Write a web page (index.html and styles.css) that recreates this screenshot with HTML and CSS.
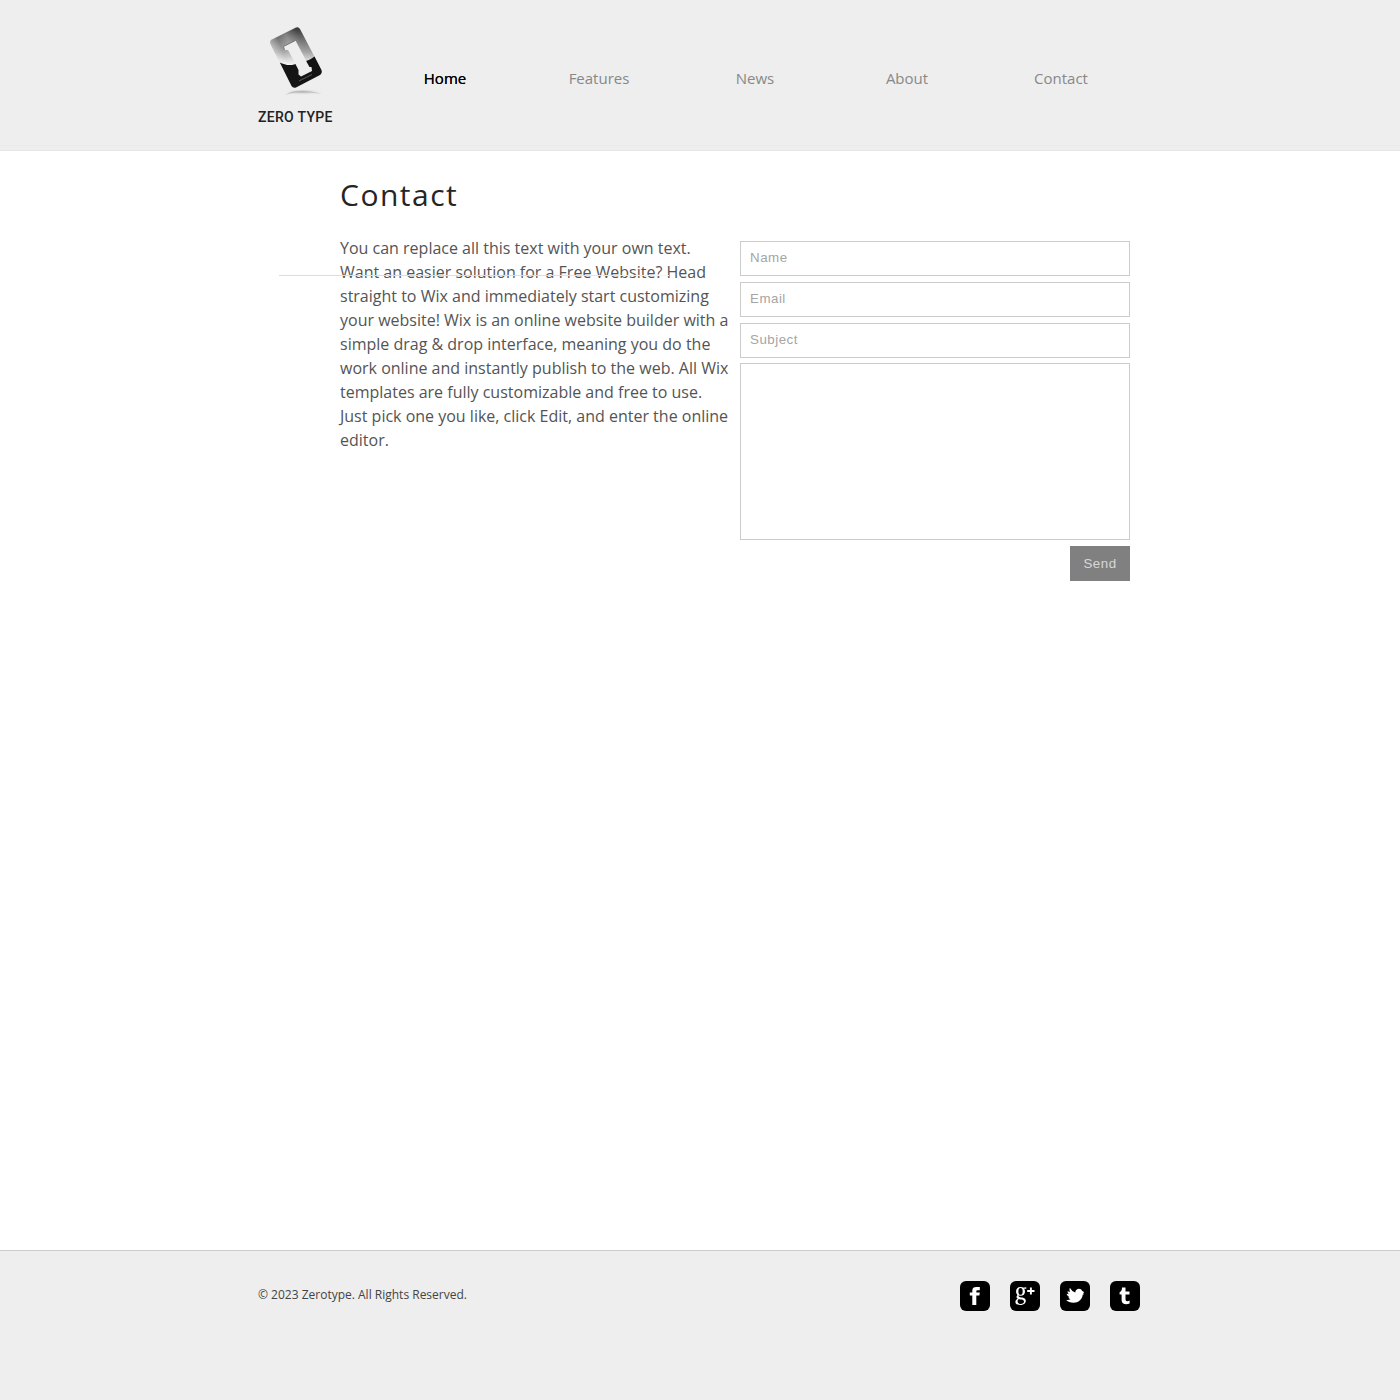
FILE: index.html
```html
<!DOCTYPE html>
<html lang="en">
<head>
<meta charset="utf-8">
<title>Contact - Zerotype</title>
<link rel="stylesheet" href="styles.css">
</head>
<body>
<header class="header">
  <div class="header-inner">
    <a class="logo">
      <svg class="logo-mark" width="75" height="80" viewBox="258 22 75 80">
        <defs>
          <linearGradient id="silver" gradientUnits="userSpaceOnUse" x1="297" y1="27" x2="297" y2="65">
            <stop offset="0" stop-color="#333"/><stop offset=".3" stop-color="#6c6c6c"/><stop offset=".65" stop-color="#a2a2a2"/><stop offset="1" stop-color="#f8f8f8"/>
          </linearGradient>
          <linearGradient id="sheen" gradientUnits="userSpaceOnUse" x1="271" y1="45" x2="298" y2="34">
            <stop offset="0" stop-color="#fff" stop-opacity=".4"/><stop offset=".3" stop-color="#fff" stop-opacity=".05"/><stop offset=".6" stop-color="#fff" stop-opacity=".25"/><stop offset="1" stop-color="#fff" stop-opacity="0"/>
          </linearGradient>
          <radialGradient id="shadow"><stop offset="0" stop-color="#bbb"/><stop offset="1" stop-color="#eee" stop-opacity="0"/></radialGradient>
        </defs>
        <ellipse cx="303" cy="92" rx="21" ry="3.500" fill="url(#shadow)"/>
        <path d="M285 95Q296 87 322 94Q300 90 285 95Z" fill="#aaa" opacity=".6"/>
        <path d="M271 40L296 27.500Q298.500 26.500 300 29L321.500 70Q322.500 73 320 75L296 87.500Q293 88.500 291.500 86L270.500 44Q269.500 41.500 271 40Z" fill="url(#silver)"/>
        <path d="M271 40L296 27.500Q298.500 26.500 300 29L315 57Q305 64 280 63L270.500 44Q269.500 41.500 271 40Z" fill="url(#sheen)"/>
        <path d="M279.800 62.500C284 64.500 289 66 294 64.500C300 62 308 62 314.500 56.500L321.500 70Q322.500 73 320 75L296 87.500Q293 88.500 291.500 86Z" fill="#141414"/>
        <path d="M283.500 46.500L295.500 40.500L307.500 63.500L309.500 67L311.500 67L312 71L301 76.500L298.500 74.500L298.500 70L289.500 52.500L288 50L284.500 50Z" fill="#eee"/>
        <path d="M284.500 50L283.500 46.500L295.500 40.500" fill="none" stroke="#666" stroke-width=".8"/>
        <path d="M299 81L312 74.500" stroke="#777" stroke-width=".7"/>
      </svg>
      <span class="logo-name">ZERO TYPE</span>
    </a>
    <nav class="nav">
      <a class="nav-link nav-link-active">Home</a>
      <a class="nav-link">Features</a>
      <a class="nav-link nav-link-news">News</a>
      <a class="nav-link nav-link-about">About</a>
      <a class="nav-link">Contact</a>
    </nav>
  </div>
</header>
<main class="main">
  <h1 class="title">Contact</h1>
  <div class="columns">
    <p class="intro">You can replace all this text with your own text.<br>Want an easier solution for a Free Website? Head<br>straight to Wix and immediately start customizing<br>your website! Wix is an online website builder with a<br>simple drag &amp; drop interface, meaning you do the<br>work online and instantly publish to the web. All Wix<br>templates are fully customizable and free to use.<br>Just pick one you like, click Edit, and enter the online<br>editor.</p>
    <form class="form">
      <input class="field" type="text" placeholder="Name">
      <input class="field" type="text" placeholder="Email">
      <input class="field" type="text" placeholder="Subject">
      <textarea class="field message"></textarea>
      <button class="send" type="button">Send</button>
    </form>
  </div>
</main>
<footer class="footer">
  <div class="footer-inner">
    <p class="copyright">© 2023 Zerotype. All Rights Reserved.</p>
    <div class="social">
      <a class="social-link"><svg width="30" height="30" viewBox="0 0 30 30"><path fill="#fff" d="M12.300 24V14.500H9.800V11.500H12.300V9.800C12.300 7 13.800 6 16.300 6H19.800V9.200H17.800C16.800 9.200 16.300 9.600 16.300 10.400V11.500H19.800L19.400 14.500H16.300V24Z"/></svg></a>
      <a class="social-link"><svg width="30" height="30" viewBox="0 0 30 30"><path fill="#fff" fill-rule="evenodd" d="M10.500 6C13.400 6 15 7.900 15 10.400C15 12.900 13.300 14.800 10.500 14.800C7.700 14.800 6.100 12.900 6.100 10.400C6.100 7.900 7.700 6 10.500 6ZM10.500 7C9.200 7 8.400 8 8.400 10.400C8.400 12.800 9.200 13.800 10.500 13.800C11.800 13.800 12.700 12.800 12.700 10.400C12.700 8 11.800 7 10.500 7Z"/><path fill="#fff" fill-rule="evenodd" d="M7.500 14L9 14.500C8.300 15.500 8.700 16 10 16.200C13.200 16.600 15.800 17 15.800 19.800C15.800 22.600 13.400 24 10.200 24C7.200 24 5.400 22.900 5.400 20.900C5.400 19.400 6.400 18.400 7.800 17.800C6.100 16.900 6.200 15.300 7.500 14ZM8.700 18.200C7 19 7 22.800 10.500 22.900C12.800 22.900 14 22 14 20.500C14 18.600 11.500 18.600 8.700 18.200ZM12.500 6.800L16.300 6.300V7.800H13.800Z"/><path fill="none" stroke="#fff" stroke-width="1.900" d="M17.200 10H24.500M20.900 6.400V13.600"/></svg></a>
      <a class="social-link"><svg width="30" height="30" viewBox="0 0 30 30"><path fill="#fff" d="M6 18.800Q8.500 19.300 10.500 18.300Q8.800 17.800 8.300 16.300H9.500Q7.200 15 6.500 12.800L9 13.200Q7.500 12 7.500 10.200L10 11Q9 9 9.800 6.800Q11.500 10 15.200 11.500C15.600 9 17 7.800 19 7.800Q21.300 7.800 22.300 10L24.300 11.300L22.900 12.200L24.200 13L22.700 13.800C22.200 18.500 18.500 21.800 13.500 21.800Q8.500 21.800 6 18.800Z"/></svg></a>
      <a class="social-link"><svg width="30" height="30" viewBox="0 0 30 30"><path fill="#fff" d="M12 6.500H15.500V10.500H19.500V13.500H15.500V18.300C15.500 20.500 17.500 20.500 19.600 19.600V22.600C15.500 24 11.600 23 11.600 19.200V13.500H9.600V11.200C11.300 10.500 12 9 12 6.500Z"/></svg></a>
    </div>
  </div>
</footer>
</body>
</html>
```
FILE: styles.css
```css
* { box-sizing: border-box; }
body {
  margin: 0;
  min-height: 1400px;
  display: flex;
  flex-direction: column;
  background: #fff;
  font-family: "Open Sans", sans-serif;
}
.header {
  height: 151px;
  background: linear-gradient(#e9e9e9, #e9e9e9) 0 145px / 100% 1px no-repeat #eee;
  border-bottom: 1px solid #e5e5e5;
}
.header-inner {
  display: flex;
  width: 884px;
  margin: 0 auto;
}
.logo {
  display: flex;
  flex-direction: column;
  width: 110px;
  padding-top: 22px;
}
.logo-mark { display: block; }
.logo-name {
  margin-top: 5px;
  font: 500 14px/20px Roboto, sans-serif;
  letter-spacing: 0.3px;
  white-space: nowrap;
  color: #222;
}
.nav { display: flex; padding-top: 68px; }
.nav-link {
  width: 154px;
  text-align: center;
  font-size: 15px;
  line-height: 20px;
  color: #888;
}
.nav-link-news { width: 156px; padding-left: 2px; }
.nav-link-about { width: 152px; padding-right: 2px; }
.nav-link-active {
  color: #000;
  text-shadow: 0 0 0.5px #000;
}
.main {
  flex: 1;
  width: 790px;
  margin-left: 340px;
  padding-top: 24px;
}
.title {
  margin: 0;
  font-size: 30px;
  line-height: 40px;
  font-weight: 400;
  letter-spacing: 1.5px;
  color: #252525;
}
.columns {
  display: flex;
  justify-content: space-between;
  margin-top: 21px;
}
.intro {
  position: relative;
  margin: 0;
  font-size: 16px;
  line-height: 24px;
  white-space: nowrap;
  color: #545454;
}
.intro::after {
  content: "";
  position: absolute;
  left: -61px;
  top: 39px;
  width: 390px;
  height: 1px;
  background: linear-gradient(to right, #ddd 70%, #f5f5f5);
}
.form {
  display: flex;
  flex-direction: column;
  width: 390px;
  padding-top: 5px;
}
.field {
  height: 35px;
  margin: 0 0 6px;
  padding: 0 9px 2px;
  border: 1px solid #ccc;
  border-radius: 0;
  background: #fff;
  font: 13.333px "Liberation Sans", sans-serif;
  letter-spacing: 0.5px;
  outline: 0;
}
.field::placeholder { color: #a5a5a5; opacity: 1; }
.message {
  height: 177px;
  margin-top: -1px;
  resize: none;
}
.send {
  align-self: flex-end;
  width: 60px;
  height: 35px;
  padding: 0;
  border: 0;
  background: #808080;
  color: #d8d8d8;
  font: 13.333px "Liberation Sans", sans-serif;
  letter-spacing: 0.5px;
}
.footer {
  height: 150px;
  background: #eee;
  border-top: 1px solid #ccc;
}
.footer-inner {
  display: flex;
  justify-content: space-between;
  width: 882px;
  margin-left: 258px;
  padding-top: 30px;
}
.copyright {
  margin: 4px 0 0;
  font-size: 12px;
  line-height: 20px;
  color: #444;
}
.social { display: flex; gap: 20px; }
.social-link {
  width: 30px;
  height: 30px;
  border-radius: 6px;
  background: #000;
}
.social-link svg { display: block; }
```
